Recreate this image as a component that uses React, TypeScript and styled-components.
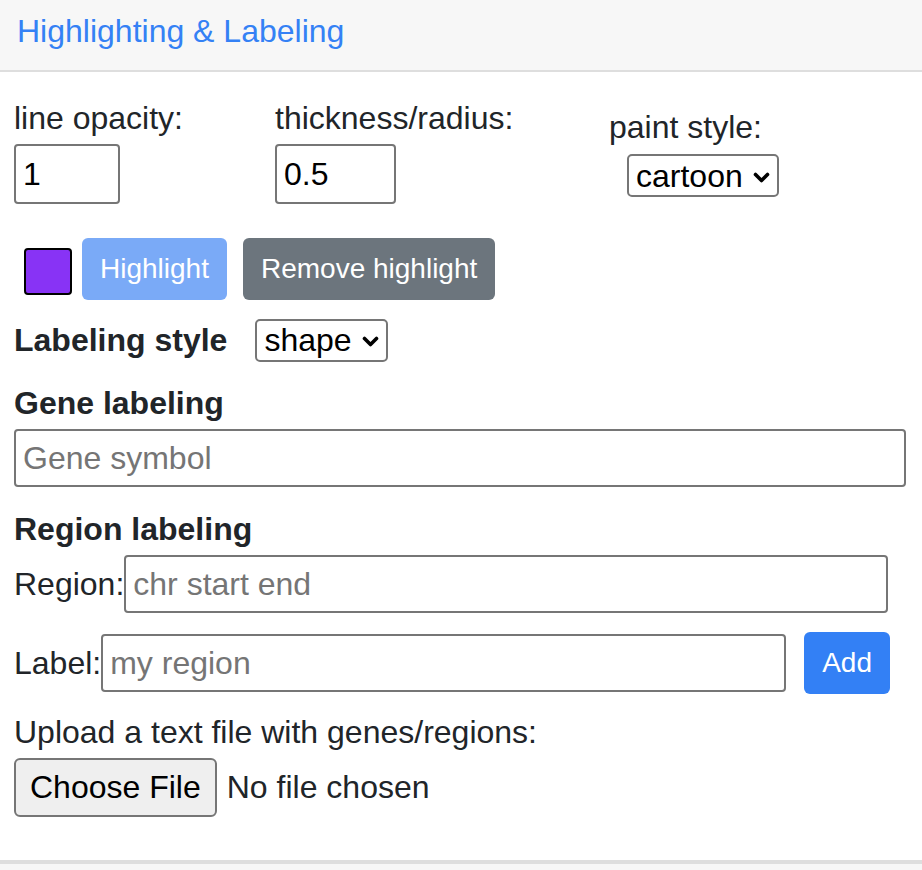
import React from "react";
import styled, { createGlobalStyle } from "styled-components";

const GlobalStyle = createGlobalStyle`
  html, body { margin: 0; padding: 0; background: #ffffff; }
  body {
    font-family: "Liberation Sans", Arial, Helvetica, sans-serif;
    color: #212529;
  }
  * { box-sizing: border-box; }
`;

const Card = styled.div`
  width: 922px;
  height: 870px;
  display: flex;
  flex-direction: column;
  overflow: hidden;
`;

const Header = styled.div`
  height: 72px;
  padding: 7px 17px 0;
  background: #f7f7f7;
  border-bottom: 2px solid #dedede;
`;

const Title = styled.a`
  font-size: 32px;
  line-height: 48px;
  color: #3481f5;
  text-decoration: none;
`;

const Body = styled.div`
  padding: 22px 16px 43px 14px;
  display: flex;
  flex-direction: column;
`;

const TopRow = styled.div`
  display: flex;
  align-items: flex-start;
`;

const Field = styled.div<{ $w?: number; $top?: number }>`
  display: flex;
  flex-direction: column;
  align-items: flex-start;
  width: ${(p) => (p.$w ? `${p.$w}px` : "auto")};
  padding-top: ${(p) => p.$top ?? 0}px;
`;

const Label = styled.label`
  font-size: 32px;
  line-height: 48px;
  height: 48px;
  white-space: nowrap;
`;

const TextInput = styled.input<{ $w?: number; $h?: number; $mt?: number; $mr?: number }>`
  font-family: inherit;
  font-size: 32px;
  color: #000;
  width: ${(p) => (p.$w ? `${p.$w}px` : "auto")};
  height: ${(p) => p.$h ?? 58}px;
  margin-top: ${(p) => p.$mt ?? 0}px;
  margin-right: ${(p) => p.$mr ?? 0}px;
  padding: 0 7px;
  border: 2px solid #767676;
  border-radius: 4px;
  background: #fff;
  outline: none;
  &::placeholder { color: #757575; }
`;

const FlexInput = styled(TextInput)`
  flex: 1;
  min-width: 0;
`;

const SelectWrap = styled.span<{ $ml?: number; $mt?: number }>`
  position: relative;
  display: inline-flex;
  margin-left: ${(p) => p.$ml ?? 0}px;
  margin-top: ${(p) => p.$mt ?? 0}px;
`;

const Select = styled.select`
  appearance: none;
  -webkit-appearance: none;
  font-family: inherit;
  font-size: 32px;
  color: #000;
  height: 43px;
  padding: 0 34px 0 7px;
  border: 2px solid #767676;
  border-radius: 5px;
  background: #fff;
  outline: none;
`;

const Chevron = styled.svg`
  position: absolute;
  right: 9px;
  top: 50%;
  width: 17px;
  height: 11px;
  margin-top: -4px;
  pointer-events: none;
`;

const ActionRow = styled.div`
  display: flex;
  align-items: flex-start;
  margin-top: 34px;
`;

const Swatch = styled.div`
  width: 48px;
  height: 47px;
  margin: 10px 10px 0 10px;
  background: #8833f5;
  border: 2px solid #000;
  border-radius: 4px;
`;

const Btn = styled.button<{ $variant: "primary" | "disabled" | "secondary"; $ml?: number; $mr?: number }>`
  font-family: inherit;
  font-size: 28px;
  line-height: 42px;
  height: 62px;
  padding: 8px 16px;
  border: 2px solid transparent;
  border-radius: 6px;
  color: #fff;
  white-space: nowrap;
  margin-left: ${(p) => p.$ml ?? 0}px;
  margin-right: ${(p) => p.$mr ?? 0}px;
  background: ${(p) =>
    p.$variant === "primary" ? "#3380f5" : p.$variant === "disabled" ? "#7aaaf7" : "#6c757d"};
  cursor: ${(p) => (p.$variant === "disabled" ? "default" : "pointer")};
`;

const InlineRow = styled.div<{ $mt: number; $gap?: number }>`
  display: flex;
  align-items: center;
  margin-top: ${(p) => p.$mt}px;
  gap: ${(p) => p.$gap ?? 0}px;
`;

const BoldLabel = styled.div<{ $mt?: number }>`
  font-size: 32px;
  line-height: 48px;
  font-weight: 700;
  margin-top: ${(p) => p.$mt ?? 0}px;
`;

const Text = styled.div<{ $mt?: number }>`
  font-size: 32px;
  line-height: 48px;
  margin-top: ${(p) => p.$mt ?? 0}px;
`;

const FileButton = styled.button`
  font-family: inherit;
  font-size: 32px;
  color: #000;
  height: 59px;
  padding: 0 14px;
  background: #efefef;
  border: 2px solid #767676;
  border-radius: 6px;
`;

const FileStatus = styled.span`
  font-size: 32px;
  margin-left: 10px;
`;

const NextHeader = styled.div`
  flex: 1;
  background: #f7f7f7;
  border-top: 4px solid #dedede;
`;

const Dropdown: React.FC<{ value: string; options: string[]; ml?: number; mt?: number }> = ({
  value,
  options,
  ml,
  mt,
}) => (
  <SelectWrap $ml={ml} $mt={mt}>
    <Select defaultValue={value}>
      {options.map((o) => (
        <option key={o}>{o}</option>
      ))}
    </Select>
    <Chevron viewBox="0 0 17 11">
      <polyline
        points="2.5,2.5 8.5,8.5 14.5,2.5"
        fill="none"
        stroke="#000"
        strokeWidth="3.6"
        strokeLinecap="round"
        strokeLinejoin="round"
      />
    </Chevron>
  </SelectWrap>
);

export default function App() {
  return (
    <>
      <GlobalStyle />
      <Card>
        <Header>
          <Title href="#">Highlighting &amp; Labeling</Title>
        </Header>
        <Body>
          <TopRow>
            <Field $w={261}>
              <Label>line opacity:</Label>
              <TextInput $w={106} $h={60} $mt={2} defaultValue="1" />
            </Field>
            <Field $w={334}>
              <Label>thickness/radius:</Label>
              <TextInput $w={121} $h={60} $mt={2} defaultValue="0.5" />
            </Field>
            <Field $top={9}>
              <Label>paint style:</Label>
              <Dropdown value="cartoon" options={["cartoon", "stick", "sphere"]} ml={18} mt={3} />
            </Field>
          </TopRow>

          <ActionRow>
            <Swatch />
            <Btn $variant="disabled" disabled>
              Highlight
            </Btn>
            <Btn $variant="secondary" $ml={16}>
              Remove highlight
            </Btn>
          </ActionRow>

          <InlineRow $mt={16} $gap={28}>
            <BoldLabel>Labeling style</BoldLabel>
            <Dropdown value="shape" options={["shape", "text"]} />
          </InlineRow>

          <BoldLabel $mt={15}>Gene labeling</BoldLabel>
          <InlineRow $mt={2}>
            <FlexInput placeholder="Gene symbol" />
          </InlineRow>

          <BoldLabel $mt={18}>Region labeling</BoldLabel>
          <InlineRow $mt={2}>
            <Text>Region:</Text>
            <FlexInput placeholder="chr start end" $mr={18} />
          </InlineRow>

          <InlineRow $mt={19}>
            <Text>Label:</Text>
            <FlexInput placeholder="my region" />
            <Btn $variant="primary" $ml={18} $mr={16}>
              Add
            </Btn>
          </InlineRow>

          <Text $mt={14}>Upload a text file with genes/regions:</Text>
          <InlineRow $mt={2}>
            <FileButton>Choose File</FileButton>
            <FileStatus>No file chosen</FileStatus>
          </InlineRow>
        </Body>
        <NextHeader />
      </Card>
    </>
  );
}
